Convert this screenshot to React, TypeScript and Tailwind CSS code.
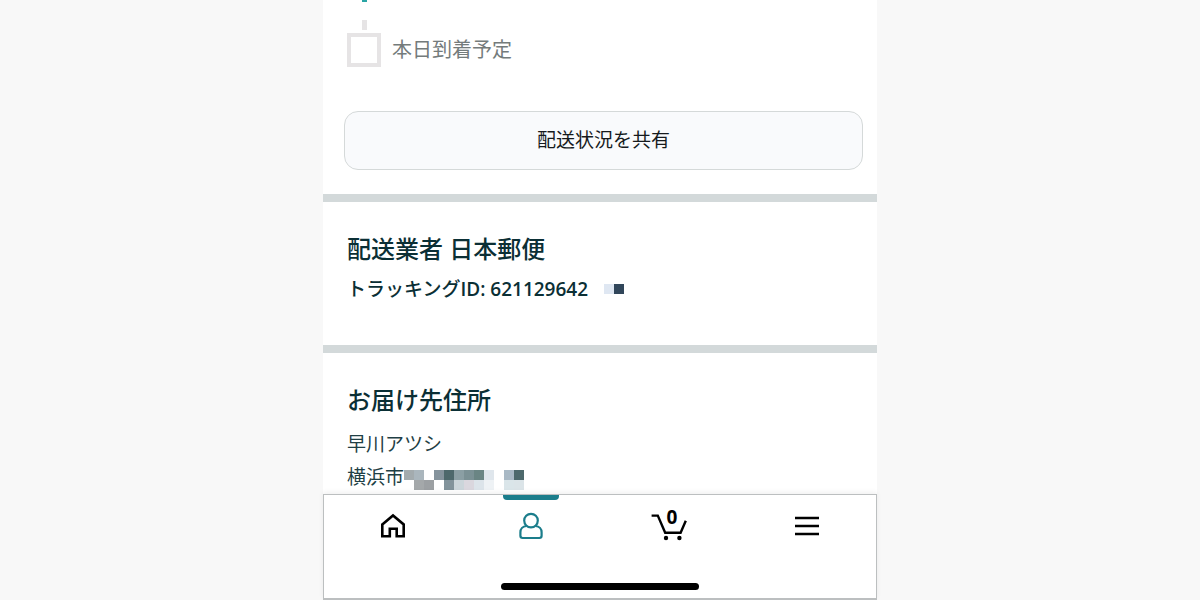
import type { ReactNode } from "react";

const TRACKING_MASK = ["#dfe7f2", "#31465a"];

const ADDRESS_MASK = [
  ["#a3abae", "#aab6bd", "#ffffff", "#85939c", "#4d686b", "#8b9fa4", "#7b9195", "#6a8584", "#dfe6ec", "#ffffff", "#a9b9c5", "#4d696c"],
  ["#ffffff", "#a4a8aa", "#9ca0a3", "#ffffff", "#82939b", "#cbd5da", "#dad7de", "#dce4ea", "#eef2f5", "#ffffff", "#dae5e9", "#dbe4e8"],
];

function MaskRow({ colors }: { colors: string[] }) {
  return (
    <span className="flex">
      {colors.map((color, i) => (
        <span key={i} className="size-[10px]" style={{ backgroundColor: color }} />
      ))}
    </span>
  );
}

function Section({ title, children }: { title: string; children: ReactNode }) {
  return (
    <section className="border-t-8 border-[#d3d9da] px-6 pt-[29px]">
      <h2 className="text-[24px] leading-9 font-medium text-[#0b2f35]">{title}</h2>
      {children}
    </section>
  );
}

function HomeIcon() {
  return (
    <svg width="26" height="26" viewBox="0 0 26 26" fill="none" stroke="currentColor" strokeWidth="2.6">
      <path d="M2.3 11.4 13 2.4l10.7 9v11.8h-7v-7.4H9.8v7.4H2.3z" />
    </svg>
  );
}

function AccountIcon() {
  return (
    <svg width="26" height="28" viewBox="0 0 26 28" fill="none" stroke="currentColor" strokeWidth="2.2">
      <circle cx="13" cy="8.6" r="6.8" />
      <path d="M8.4 14C4.8 14.2 2.4 16.8 2.4 20.2v3.6c0 1.4.8 2.2 2.2 2.2h16.800c1.4 0 2.2-.8 2.2-2.2v-3.6c0-3.4-2.4-6-6-6.2" />
    </svg>
  );
}

function CartIcon() {
  return (
    <svg width="36" height="30" viewBox="0 0 36 30" fill="none" stroke="currentColor" strokeWidth="2.4">
      <path d="M.6 4.6h6.2l7.4 17.200h15.400l5.200-12" />
      <circle cx="15" cy="27" r="2.200" fill="currentColor" stroke="none" />
      <circle cx="28.400" cy="27" r="2.200" fill="currentColor" stroke="none" />
    </svg>
  );
}

function MenuIcon() {
  return (
    <svg width="24" height="20" viewBox="0 0 24 20" fill="none" stroke="currentColor" strokeWidth="2.6">
      <path d="M0 2h24M0 10h24M0 18h24" />
    </svg>
  );
}

function TabBar() {
  const tab = "relative flex h-[62px] flex-1 items-center justify-center text-black";

  return (
    <nav className="sticky bottom-0 border border-b-2 border-[#bcbfc0] bg-white shadow-[0_-2px_5px_rgba(0,0,0,0.06)]">
      <div className="flex">
        <a href="#home" aria-label="ホーム" className={tab}>
          <HomeIcon />
        </a>
        <a href="#account" aria-label="アカウント" aria-current="page" className="relative flex h-[62px] flex-1 items-center justify-center text-[#1b7d8b]">
          <span className="absolute top-0 h-[5px] w-14 rounded-b bg-[#1b7d8b]" />
          <AccountIcon />
        </a>
        <a href="#cart" aria-label="カート" className={tab}>
          <span className="relative">
            <CartIcon />
            <span className="absolute -top-1 left-0 w-full pl-[6px] text-center font-['Open_Sans',sans-serif] text-[19px] leading-5 font-bold">0</span>
          </span>
        </a>
        <button type="button" aria-label="メニュー" className={tab}>
          <MenuIcon />
        </button>
      </div>
      <div className="flex justify-center pt-[26px] pb-2">
        <span className="h-[7px] w-[198px] rounded-full bg-black" />
      </div>
    </nav>
  );
}

export default function App() {
  return (
    <div className="min-h-screen bg-[#f8f8f8] font-['Open_Sans','Noto_Sans_CJK_JP',sans-serif]">
      <main className="mx-auto max-w-[554px] bg-white">
        <div className="px-6">
          <div className="flex w-[34px] flex-col items-center">
            <span className="h-[2px] w-[5px] bg-[#2aa5a5]" />
            <span className="mt-[18px] h-[10px] w-[5px] bg-[#e6e4e5]" />
          </div>
          <div className="mt-[3px] flex items-center gap-[11px]">
            <span className="size-[34px] border-4 border-[#e6e4e5]" />
            <span className="text-[20px] leading-[34px] text-[#747b7b]">本日到着予定</span>
          </div>
        </div>
        <div className="px-[14px] pt-11 pb-6 pl-[21px]">
          <button type="button" className="h-[59px] w-full rounded-[14px] border border-[#d5d9d9] bg-[#f9fafc] text-[19px] text-[#161a1d]">
            配送状況を共有
          </button>
        </div>

        <Section title="配送業者 日本郵便">
          <div className="mt-2 flex items-center gap-4 pb-[42px] text-[19px] leading-7 font-medium text-[#0b2f35]">
            <p>
              トラッキング<span className="font-semibold">ID: 621129642</span>
            </p>
            <MaskRow colors={TRACKING_MASK} />
          </div>
        </Section>

        <Section title="お届け先住所">
          <p className="mt-[10px] text-[19px] leading-[33px] text-[#1f3f45]">早川アツシ</p>
          <div className="flex items-center text-[19px] leading-[33px] text-[#1f3f45]">
            横浜市
            <span className="pt-1">
              {ADDRESS_MASK.map((colors, i) => (
                <MaskRow key={i} colors={colors} />
              ))}
            </span>
          </div>
        </Section>

        <TabBar />
      </main>
    </div>
  );
}
